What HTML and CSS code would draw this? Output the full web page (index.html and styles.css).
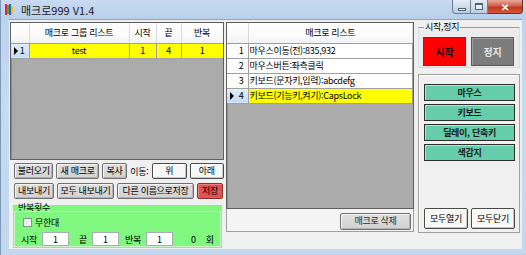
FILE: index.html
```html
<!DOCTYPE html>
<html lang="ko">
<head>
  <meta charset="UTF-8">
  <title>매크로999 V1.4</title>
  <link rel="stylesheet" href="styles.css">
</head>
<body>
  <div class="window">
    <div class="titlebar">
      <svg class="app-icon" width="8" height="11" viewBox="0 0 8 11">
        <rect x="0" y="0" width="2" height="11" fill="#e8262b"/>
        <rect x="2" y="1" width="2" height="9" fill="#2fb34a"/>
        <rect x="4" y="0" width="2" height="11" fill="#2b5fd9"/>
        <rect x="6" y="2" width="2" height="8" fill="#f2c200"/>
      </svg>
      <span class="title">매크로999 V1.4</span>
      <div class="caption">
        <span class="cap-btn cap-min"><i></i></span>
        <span class="cap-btn cap-max"><i></i></span>
        <span class="cap-btn cap-close">✕</span>
      </div>
    </div>

    <div class="client">
      <div class="col-left">
        <div class="grid group-grid">
          <table>
            <tr class="head">
              <th class="rh"></th>
              <th class="c-name">매크로 그룹 리스트</th>
              <th class="c-start">시작</th>
              <th class="c-end">끝</th>
              <th class="c-rep">반복</th>
            </tr>
            <tr class="sel">
              <td class="rh"><span class="arrow"></span>1</td>
              <td>test</td>
              <td>1</td>
              <td>4</td>
              <td>1</td>
            </tr>
          </table>
        </div>

        <div class="btn-row">
          <button class="btn b-load">불러오기</button>
          <button class="btn b-new">새 매크로</button>
          <button class="btn b-copy">복사</button>
          <span class="move-label">이동:</span>
          <button class="btn white b-up">위</button>
          <button class="btn white b-down">아래</button>
        </div>
        <div class="btn-row">
          <button class="btn b-load">내보내기</button>
          <button class="btn b-export-all">모두 내보내기</button>
          <button class="btn b-save-as">다른 이름으로저장</button>
          <button class="btn red b-save">저장</button>
        </div>

        <div class="repeat-box">
          <div class="repeat-title">반복횟수</div>
          <div class="repeat-frame">
            <label class="check-row"><span class="checkbox"></span>무한대</label>
            <div class="count-row">
              <span>시작</span><input class="num" value="1">
              <span class="lbl-end">끝</span><input class="num" value="1">
              <span class="lbl-rep">반복</span><input class="num" value="1">
              <span class="count">0</span><span>회</span>
            </div>
          </div>
        </div>
      </div>

      <div class="col-mid">
        <div class="grid macro-grid">
          <table>
            <tr class="head">
              <th class="rh"></th>
              <th>매크로 리스트</th>
            </tr>
            <tr><td class="rh">1</td><td class="left">마우스이동(전):835,932</td></tr>
            <tr><td class="rh">2</td><td class="left">마우스버튼:좌측클릭</td></tr>
            <tr><td class="rh">3</td><td class="left">키보드(문자키,입력):abcdefg</td></tr>
            <tr class="sel"><td class="rh"><span class="arrow"></span>4</td><td class="left">키보드(기능키,켜기):CapsLock</td></tr>
          </table>
        </div>
        <div class="mid-foot">
          <button class="btn b-delete">매크로 삭제</button>
        </div>
      </div>

      <div class="col-right">
        <fieldset class="run-box">
          <legend>시작,정지</legend>
          <button class="big-btn start">시작</button>
          <button class="big-btn stop">정지</button>
        </fieldset>
        <div class="tool-panel">
          <button class="tool-btn">마우스</button>
          <button class="tool-btn">키보드</button>
          <button class="tool-btn">딜레이, 단축키</button>
          <button class="tool-btn">색감지</button>
          <div class="panel-foot">
            <button class="btn white b-all">모두열기</button>
            <button class="btn white b-all">모두닫기</button>
          </div>
        </div>
      </div>
    </div>
  </div>
</body>
</html>
```

FILE: styles.css
```css
* {
  box-sizing: border-box;
}

body {
  margin: 0;
  font-family: "Noto Sans CJK KR", "Liberation Sans", sans-serif;
  font-size: 9px;
  letter-spacing: -0.3px;
  color: #000;
  background: #fff;
}

button, input {
  font-family: inherit;
  font-size: 9px;
  letter-spacing: -0.3px;
  color: #000;
  margin: 0;
  padding: 0;
  white-space: nowrap;
}

.window {
  width: 526px;
  height: 255px;
  display: flex;
  flex-direction: column;
  padding: 0 4px 6px 8px;
  background: linear-gradient(to bottom, #bcd2ec, #c6daf0 40%, #c3d8ef);
  border-left: 1px solid #7d98b8;
}

/* title bar */
.titlebar {
  height: 20px;
  display: flex;
  align-items: center;
  margin: 0 -4px 0 -8px;
  padding-left: 4px;
  background: linear-gradient(to bottom, #c8dbf1, #b9cfea);
}

.app-icon {
  margin-right: 8px;
}

.title {
  font-size: 11px;
  letter-spacing: 0;
  color: #1e1e1e;
}

.caption {
  margin-left: auto;
  align-self: flex-start;
  display: flex;
  margin-right: 3px;
}

.cap-btn {
  height: 14px;
  display: flex;
  align-items: center;
  justify-content: center;
  border: 1px solid #6e7f96;
  border-top: none;
  background: linear-gradient(to bottom, #e4edf8, #cfdcec 50%, #bccde2);
}

.cap-min {
  width: 19px;
  border-bottom-left-radius: 4px;
}

.cap-min i {
  width: 8px;
  height: 3px;
  margin-top: 5px;
  background: #fff;
  border: 1px solid #50617a;
}

.cap-max {
  width: 17px;
  border-left: none;
}

.cap-max i {
  width: 8px;
  height: 7px;
  border: 1px solid #50617a;
  border-top-width: 2px;
  background: #e8eef6;
}

.cap-close {
  width: 35px;
  border-left: none;
  border-bottom-right-radius: 4px;
  color: #fff;
  font-size: 10px;
  font-weight: bold;
  background: linear-gradient(to bottom, #e9a99a, #d0614b 45%, #c0391f 55%, #d4583c);
  border-color: #7a2a1c;
}

/* client area */
.client {
  flex: 1;
  display: flex;
  gap: 2px;
  padding: 2px 1px 0 1px;
  background: #f0f0f0;
  border-top: 1px solid #8fa6c2;
}

.col-left {
  width: 214px;
  display: flex;
  flex-direction: column;
}

.col-mid {
  width: 189px;
  display: flex;
  flex-direction: column;
  height: 210px;
}

.col-right {
  width: 104px;
  margin-left: 1px;
  display: flex;
  flex-direction: column;
}

/* data grids */
.grid {
  background: #ababab;
  border: 1px solid #5f5f5f;
  box-shadow: inset 1px 1px 0 #8a8a8a;
  overflow: hidden;
}

.group-grid {
  height: 138px;
}

.macro-grid {
  height: 187px;
}

.grid table {
  border-collapse: collapse;
  table-layout: fixed;
  width: 100%;
}

.grid th {
  height: 20px;
  font-weight: normal;
  background: linear-gradient(to bottom, #ffffff, #fbfbfb 60%, #f1f2f4);
  border-right: 1px solid #d9dbde;
  border-bottom: 1px solid #a0a0a0;
  text-align: center;
  padding: 0;
}

.grid td {
  height: 15px;
  padding: 0 2px;
  background: #fff;
  border-right: 1px solid #a0a0a0;
  border-bottom: 1px solid #a0a0a0;
  text-align: center;
  white-space: nowrap;
  overflow: hidden;
  line-height: 13px;
}

.grid td.left {
  text-align: left;
  padding-left: 1px;
}

.grid td.rh {
  text-align: right;
  padding-right: 4px;
  background: #fcfcfc;
  position: relative;
}

.grid tr.sel td {
  background: #ffff00;
}

.grid tr.sel td.rh {
  background: linear-gradient(to bottom, #e3effb, #c4dbf3);
}

.arrow {
  position: absolute;
  left: 3px;
  top: 3px;
  border-left: 4px solid #000;
  border-top: 4px solid transparent;
  border-bottom: 4px solid transparent;
}

.group-grid .rh { width: 18px; }
.group-grid .c-name { width: 100px; }
.group-grid .c-start { width: 27px; }
.group-grid .c-end { width: 25px; }
.group-grid .c-rep { width: 42px; }

.macro-grid .rh { width: 21px; }

/* buttons */
.btn {
  height: 16px;
  background: linear-gradient(to bottom, #e0e0e0, #d2d2d2);
  border: 1px solid #707070;
  box-shadow: inset 1px 1px 0 #f4f4f4, inset -1px -1px 0 #b4b4b4;
  border-radius: 2px;
  line-height: 12px;
  cursor: pointer;
}

.btn.white {
  background: #f7f7f7;
  border-color: #4a4a4a;
  box-shadow: inset 1px 1px 0 #fff, inset -1px -1px 0 #c8c8c8;
}

.btn.red {
  background: #e05454;
  border-color: #8c3030;
  box-shadow: inset 1px 1px 0 #f08080;
}

.btn-row {
  display: flex;
  align-items: center;
  gap: 3px;
  padding-left: 4px;
  margin-top: 3px;
}

.btn-row + .btn-row {
  margin-top: 4px;
}

.b-load { width: 40px; }
.b-new { width: 43px; }
.b-copy { width: 26px; }
.b-up, .b-down { width: 35px; }
.b-export-all { width: 57px; }
.b-save-as { width: 77px; }
.b-save { width: 26px; }

.move-label {
  width: 19px;
  white-space: nowrap;
}

/* repeat count box */
.repeat-box {
  margin: 6px 2px 1px 3px;
  flex: 1;
  display: flex;
  flex-direction: column;
  background: #80f880;
}

.repeat-title {
  height: 6px;
  line-height: 6px;
  padding-left: 5px;
}

.repeat-frame {
  flex: 1;
  margin: 0 1px 1px 1px;
  border: 1px solid #c9f4c9;
  padding: 6px 0 0 8px;
}

.check-row {
  display: flex;
  align-items: center;
  gap: 3px;
  height: 9px;
}

.checkbox {
  width: 9px;
  height: 9px;
  background: linear-gradient(to bottom right, #e4e4e4, #fafafa);
  border: 1px solid #8e8f8f;
}

.count-row {
  display: flex;
  align-items: center;
  margin-top: 5px;
  margin-left: -2px;
  white-space: nowrap;
}

.count-row span {
  flex: none;
}

.num {
  flex: none;
  width: 27px;
  height: 14px;
  margin-left: 5px;
  border: 1px solid #a8acb0;
  background: #fff;
  text-align: center;
  line-height: 12px;
}

.lbl-end {
  margin-left: 10px;
}

.lbl-rep {
  margin-left: 6px;
}

.count {
  margin-left: 18px;
  margin-right: 10px;
}

/* middle column */
.mid-foot {
  flex: 1;
  display: flex;
  align-items: center;
  justify-content: flex-end;
  padding: 2px 2px 0 0;
  background: #f4f4f4;
  border: 1px solid #a0a0a0;
  border-top: none;
}

.b-delete {
  width: 71px;
  height: 17px;
  color: #2a2a2a;
}

/* right column */
.run-box {
  margin: 0 1px;
  height: 46px;
  padding: 5px 0 0 4px;
  border: 1px solid #d5dfe5;
  border-top-color: #9a9a9a;
  background: #ececec;
  display: flex;
  gap: 5px;
  min-width: 0;
}

.run-box legend {
  padding: 0 1px;
  margin-left: 1px;
  line-height: 10px;
}

.big-btn {
  width: 43px;
  height: 29px;
  font-weight: bold;
  font-size: 10px;
  border: 1px solid #444;
}

.big-btn.start {
  background: #ff0000;
  color: #000;
}

.big-btn.stop {
  background: #7c7c7c;
  color: #e6e6e6;
  border-color: #5a5a5a;
  box-shadow: inset 1px 1px 0 #a0a0a0;
}

.tool-panel {
  margin: 6px 1px 0 1px;
  height: 159px;
  display: flex;
  flex-direction: column;
  gap: 3px;
  padding: 9px 4px 3px 5px;
  border: 1px solid #a0a0a0;
  box-shadow: inset 1px 1px 0 #fff;
}

.tool-btn {
  height: 17px;
  background: #66cdaa;
  border: 1px solid #2d2d2d;
  box-shadow: inset 1px 1px 0 #a9e8d2;
  font-weight: bold;
  color: #1a1a1a;
}

.panel-foot {
  margin-top: auto;
  display: flex;
  gap: 3px;
}

.b-all {
  width: 45px;
  height: 21px;
}
```
